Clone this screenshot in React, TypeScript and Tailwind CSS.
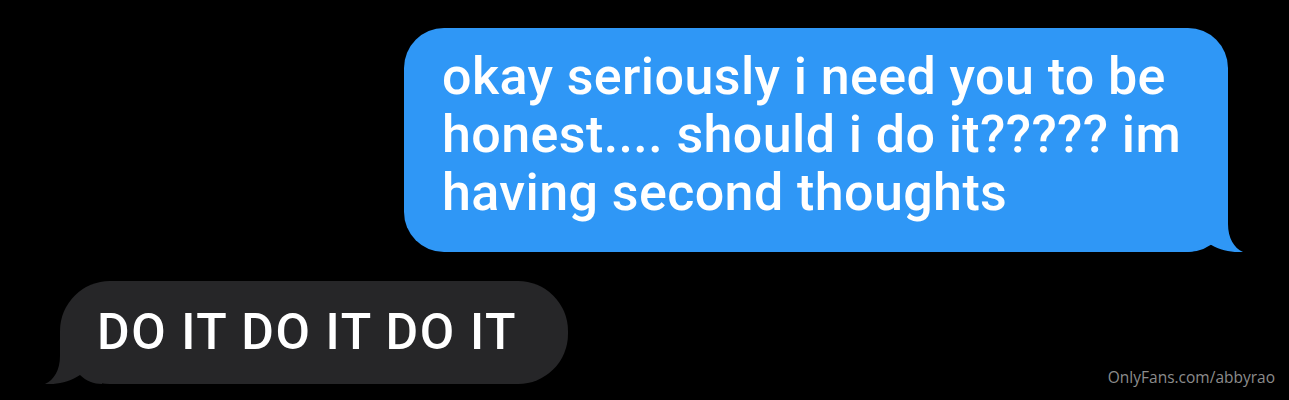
import React from "react";

const BlueTail = () => (
  <svg className="absolute right-[-18px] bottom-0" width="60" height="50" viewBox="0 0 60 50">
    <path d="M0 0 H42 V22 C42 36 48 46 57 50 C47 51 32 48 22 41 C16 47 8 50 0 50 Z" fill="#2f97f6" />
  </svg>
);

const GrayTail = () => (
  <svg className="absolute left-[-18px] bottom-0" width="60" height="50" viewBox="0 0 60 50">
    <path d="M60 0 H18 V22 C18 36 12 46 3 50 C13 51 28 48 38 41 C44 47 52 50 60 50 Z" fill="#262628" />
  </svg>
);

export default function App() {
  return (
    <div className="h-[400px] w-[1289px] bg-black overflow-hidden flex flex-col pt-[28px]">
      <div className="flex justify-end pr-[61px]">
        <div className="relative w-[824px] h-[224px] bg-[#2f97f6] rounded-[40px] pl-[38px] pt-[20px]">
          <BlueTail />
          <p
            className="relative text-white text-[52px] leading-[58px] font-medium whitespace-nowrap tracking-[0.4px]"
            style={{ fontFamily: "Roboto, 'Liberation Sans', sans-serif" }}
          >
            okay seriously i need you to be
            <br />
            honest.... should i do it????? im
            <br />
            having second thoughts
          </p>
        </div>
      </div>
      <div className="flex justify-between items-end mt-[29px] pl-[60px] pr-[14px]">
        <div className="relative w-[508px] h-[103px] bg-[#262628] rounded-[50px] flex items-center pl-[37px]">
          <GrayTail />
          <span
            className="relative text-white text-[50px] font-medium whitespace-nowrap tracking-[1.6px]"
            style={{ fontFamily: "Roboto, 'Liberation Sans', sans-serif" }}
          >
            DO IT DO IT DO IT
          </span>
        </div>
        <span
          className="text-[#8c8c8c] text-[15.5px] mb-[-5px]"
          style={{ fontFamily: "'Open Sans', sans-serif" }}
        >
          OnlyFans.com/abbyrao
        </span>
      </div>
    </div>
  );
}
